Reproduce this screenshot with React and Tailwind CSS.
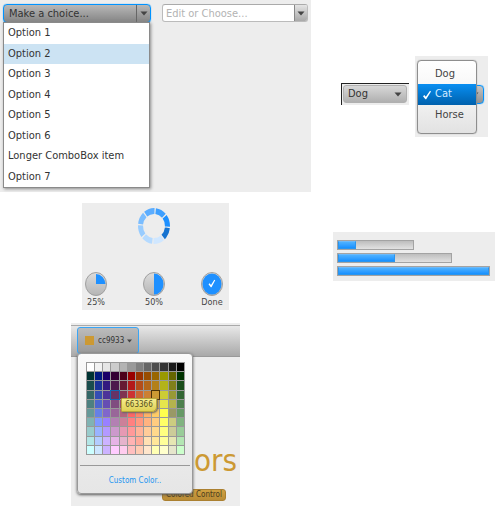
import React from 'react';

const OPTIONS = [
  'Option 1', 'Option 2', 'Option 3', 'Option 4', 'Option 5', 'Option 6',
  'Longer ComboBox item', 'Option 7',
];

const PALETTE = [
  'ffffff f2f2f2 e6e6e6 cccccc b3b3b3 999999 808080 666666 4d4d4d 333333 1a1a1a 000000',
  '003333 001a80 1a0068 330033 4d001a 990000 993300 994d00 996600 999900 666600 003300',
  '1a4d4d 1a3399 331a80 4d1a4d 661a33 b31a1a b34d1a b3661a b3801a b3b31a 80801a 1a4d1a',
  '336666 334db3 4d3399 663366 803350 cc3333 cc6633 cc8033 cc9933 cccc33 999933 336633',
  '4d8080 4d66cc 664db3 804d80 994d66 e64d4d e6804d e6994d e6b34d e6e64d b3b34d 4d804d',
  '669999 6680e6 8066cc 996699 b36680 ff6666 ff8566 ffb366 ffcc66 ffff4d 999966 669966',
  '80b3b3 8099ff 9980ff b380b3 cc8099 ff8080 ff9980 ffb380 ffcc80 ffff66 cccc80 80b380',
  '99cccc 99b3ff b399ff cc99cc e699b3 ff9999 ffb399 ffcc99 ffd98c ffff80 cccc99 99cc99',
  'b3e6e6 b3ccff ccb3ff e6b3e6 e6b3cc ffb3b3 ffaa99 ffe0b3 ffe699 ffff99 e6e6b3 b3e6b3',
  'ccffff cce6ff ccb3ff ffccff ffccee ffbfbf ffccb3 ffe6cc ffffb3 ffffcc e6e6cc ccffcc',
].map((row) => row.split(' '));

const SEGMENTS = ['#3d9fff', '#1e90ff', '#1673d0', '#d0e7ff', '#b5daff', '#98ccff', '#7abdff', '#5badff'];

function Caret({ className = '' }) {
  return (
    <svg className={className} width="8" height="5" viewBox="0 0 8 5" aria-hidden="true">
      <path d="M0.5 0.5h7L4 4.5z" fill="#444" />
    </svg>
  );
}

function Check({ className = '' }) {
  return (
    <svg className={className} width="10" height="10" viewBox="0 0 10 10" aria-hidden="true">
      <path d="M1 6.2 2.3 5 3.8 6.8 8 0.8 9 1.4 4.2 9.3H3.4z" fill="#fff" />
    </svg>
  );
}

function ComboPanel() {
  return (
    <section className="flex h-[192px] items-start gap-[11px] bg-[#ededed] px-[3px] pt-1">
      <div className="relative w-[148px]">
        <div className="relative h-[19px] rounded-[4px] border border-[#0093ff] bg-linear-to-b from-[#b8b8b8] to-[#858585] shadow-[0_0_1px_#0093ff]">
          <select
            aria-label="Make a choice"
            defaultValue=""
            className="block h-[18px] w-full appearance-none bg-transparent pl-[5px] text-[11px] leading-[18px] text-[#333] outline-none"
          >
            <option value="">Make a choice...</option>
            {OPTIONS.map((o) => <option key={o}>{o}</option>)}
          </select>
          <span className="pointer-events-none absolute inset-y-0 right-0 flex w-[14px] items-center justify-center border-l border-[#666]">
            <Caret />
          </span>
        </div>
        <ul
          role="listbox"
          aria-label="Choices"
          className="absolute top-[18px] left-0 grid h-[166px] w-[147px] grid-rows-8 border border-[#8a8a8a] bg-white text-[11px] text-[#333] shadow-[1px_1px_3px_#888]"
        >
          {OPTIONS.map((o, i) => (
            <li
              key={o}
              role="option"
              aria-selected={i === 1}
              className={`flex items-center pl-1 leading-4 ${i === 1 ? 'bg-[#cce3f3]' : ''}`}
            >
              {o}
            </li>
          ))}
        </ul>
      </div>
      <div className="flex h-[18px] w-[146px] overflow-hidden rounded-[3px] border border-[#bbb] border-t-[#aaa] bg-white">
        <input
          type="text"
          aria-label="Edit or choose"
          placeholder="Edit or Choose..."
          className="min-w-0 flex-1 bg-transparent pt-px pl-[3px] text-[11px] leading-4 outline-none placeholder:text-[#b3b3b3]"
        />
        <button
          type="button"
          aria-label="Show choices"
          className="flex w-[13px] items-center justify-center border-l border-[#888] bg-linear-to-b from-[#e4e4e4] to-[#a9a9a9]"
        >
          <Caret />
        </button>
      </div>
    </section>
  );
}

function ChoicePanels() {
  return (
    <section className="flex items-start gap-[6px] pt-[56px] pl-[30px]">
      <div className="mt-[27px] w-[68px] border-t border-l border-[#222] bg-[#ededed] pt-px pb-[2px] pl-px pr-[2px]">
        <div className="relative h-[18px] rounded-[3px] border border-[#b0b0b0] bg-linear-to-b from-[#d8d8d8] to-[#b0b0b0]">
          <select
            aria-label="Animal"
            className="block h-4 w-full appearance-none bg-transparent pl-1 text-[11px] leading-4 text-[#333] outline-none"
          >
            <option>Dog</option>
            <option>Cat</option>
            <option>Horse</option>
          </select>
          <Caret className="pointer-events-none absolute top-[6px] right-1" />
        </div>
      </div>
      <div className="relative h-[81px] w-[73px] bg-[#ededed] pt-[29px] pl-[40px]">
        <button
          type="button"
          aria-label="Close animal menu"
          className="flex h-[19px] w-[29px] items-center justify-end rounded-[4px] border border-[#0093ff] bg-linear-to-b from-[#c4c4c4] to-[#929292] pr-1 shadow-[0_0_1px_#0093ff]"
        >
          <Caret />
        </button>
        <ul
          role="listbox"
          aria-label="Animals"
          className="absolute top-1 left-[2px] h-[74px] w-[60px] rounded-[4px] border border-[#8e8e8e] bg-linear-to-b from-white via-[#f4f4f4] to-[#e2e2e2] pt-[3px] text-[11px] text-[#444] shadow-[0_0_1px_#888]"
        >
          <li role="option" aria-selected="false" className="flex h-5 items-center pl-[17px]">Dog</li>
          <li role="option" aria-selected="true" className="flex h-[21px] items-center gap-[3px] bg-linear-to-b from-[#0a8ff2] to-[#0061ad] pl-1 text-[#d5ebff]">
            <Check />
            Cat
          </li>
          <li role="option" aria-selected="false" className="flex h-5 items-center pl-[17px]">Horse</li>
        </ul>
      </div>
    </section>
  );
}

function segmentPath(i) {
  const point = (deg, rx, ry) => {
    const a = ((deg - 90) * Math.PI) / 180;
    return `${(17 + rx * Math.cos(a)).toFixed(2)} ${(19 + ry * Math.sin(a)).toFixed(2)}`;
  };
  const from = i * 45 + 7;
  const to = i * 45 + 47;
  return `M${point(from, 16, 18)}A16 18 0 0 1 ${point(to, 16, 18)}L${point(to, 11, 12)}A11 12 0 0 0 ${point(from, 11, 12)}Z`;
}

function Dial({ value, label }) {
  return (
    <figure className="flex w-[30px] flex-col items-center">
      <svg width="24" height="26" viewBox="0 0 24 26" role="img" aria-label={`Progress ${label}`}>
        <defs>
          <linearGradient id={`dial-${value}`} x1="0" y1="0" x2="0" y2="1">
            <stop offset="0" stopColor="#dcdcdc" />
            <stop offset="1" stopColor="#b5b5b5" />
          </linearGradient>
        </defs>
        <ellipse cx="12" cy="13" rx="10.5" ry="11.5" fill={`url(#dial-${value})`} stroke="#a0a0a0" />
        {value === 25 && <path d="M12 13V3A9.5 10.5 0 0 1 21.5 13z" fill="#1e90ff" />}
        {value === 50 && <path d="M12 2.5A9.5 10.5 0 0 1 12 23.5z" fill="#1e90ff" />}
        {value === 100 && (
          <>
            <ellipse cx="12" cy="13" rx="9.5" ry="10.5" fill="#1e90ff" />
            <path d="M8.5 13.3 9.6 12.3 11 13.9 14.3 8.7 15.2 9.2 11.5 16.3H10.8z" fill="#fff" />
          </>
        )}
      </svg>
      <figcaption className="text-[9px] leading-[10px] text-[#444]">{label}</figcaption>
    </figure>
  );
}

function IndicatorPanel() {
  return (
    <section className="ml-[82px] flex h-[107px] w-[147px] flex-col items-center justify-between bg-[#ededed] pt-1 pr-[3px] pb-[3px]">
      <svg width="34" height="38" viewBox="0 0 34 38" role="img" aria-label="Loading">
        {SEGMENTS.map((color, i) => <path key={color} d={segmentPath(i)} fill={color} />)}
      </svg>
      <div className="flex w-[146px] justify-between">
        <Dial value={25} label="25%" />
        <Dial value={50} label="50%" />
        <Dial value={100} label="Done" />
      </div>
    </section>
  );
}

function Bar({ value, className }) {
  return (
    <div
      role="progressbar"
      aria-label="Progress"
      aria-valuenow={value}
      className={`h-[10px] border border-[#a3a3a3] bg-linear-to-b from-[#bdbdbd] to-[#e2e2e2] ${className}`}
    >
      <div
        className="h-full border border-[#2a95ee] border-t-[#6bb9fa] bg-linear-to-b from-[#4db1ff] to-[#1490ff]"
        style={{ width: `${value}%` }}
      />
    </div>
  );
}

function BarPanel() {
  return (
    <section className="mt-[29px] ml-[22px] flex h-[49px] w-[162px] flex-col gap-[3px] bg-[#ededed] px-1 pt-2">
      <Bar value={24} className="w-[77px]" />
      <Bar value={50} className="w-[115px]" />
      <Bar value={100} className="w-[153px]" />
    </section>
  );
}

function ColorPanel() {
  return (
    <section className="relative mt-[13px] ml-[71px] h-[183px] w-[169px] overflow-hidden bg-[#ededed] pt-[2px]">
      <header className="h-[32px] border-t border-b border-t-[#aaa] border-b-[#999] bg-linear-to-b from-[#e8e8e8] to-[#a9a9a9] pt-px pl-[6px]">
        <button
          type="button"
          className="flex h-[27px] w-[62px] items-center gap-1 rounded-[3px] border border-[#3aa5f5] bg-linear-to-b from-[#bcbcbc] to-[#999] pl-[7px] text-[8px] text-[#333]"
        >
          <span className="size-[9px] shrink-0 bg-[#cc9933]" />
          cc9933
          <svg className="-ml-px shrink-0" width="5" height="4" viewBox="0 0 5 4" aria-hidden="true">
            <path d="M0 0.5h5L2.5 3.5z" fill="#444" />
          </svg>
        </button>
      </header>
      <h2 className="mt-[83px] pr-[3px] text-right text-[31px] leading-[40px] text-[#cc9933]">ors</h2>
      <button
        type="button"
        className="mt-[9px] ml-[91px] flex h-3 w-[64px] items-center justify-center rounded-[3px] border border-[#ab8030] bg-linear-to-b from-[#cfa040] to-[#b98c36] text-[8px] whitespace-nowrap text-[#4a3c1c]"
      >
        Colored Control
      </button>
      <div className="absolute top-[30px] left-[6px] h-[141px] w-[116px] rounded-[4px] border border-[#999] bg-linear-to-b from-[#fafafa] via-[#ededed] to-[#e6e6e6] px-[2px] pt-2 shadow-[0_1px_3px_#555]">
        <div className="mx-[6px] grid h-[93px] w-[99px] grid-cols-12 grid-rows-10 gap-px border border-[#999] bg-[#999]">
          {PALETTE.flatMap((row, r) => row.map((hex, c) => (
            <button
              key={`${r}-${c}`}
              type="button"
              aria-label={`#${hex}`}
              style={{ backgroundColor: `#${hex}` }}
              className={
                hex === '663366' ? 'outline outline-[#1468b4]' : hex === 'cc9933' ? 'outline outline-[#4a3208]' : ''
              }
            />
          )))}
        </div>
        <hr className="mt-[10px] border-[#999]" />
        <a href="#custom" className="mt-2 block text-center text-[8px] leading-[14px] text-[#1e96f0]">Custom Color..</a>
        <div
          role="tooltip"
          className="absolute top-[44px] left-[43px] h-[14px] w-[36px] rounded-[1px] rounded-br-[5px] border border-[#b8a83c] bg-linear-to-b from-[#f5ec8c] to-[#dfd052] text-center text-[8px] leading-3 text-[#55501c] shadow-[1px_1px_2px_#666]"
        >
          663366
        </div>
      </div>
    </section>
  );
}

export default function App() {
  return (
    <main className="min-h-screen bg-white font-['DejaVu_Sans_Condensed','DejaVu_Sans',sans-serif]">
      <div className="grid grid-cols-[311px_1fr]">
        <ComboPanel />
        <ChoicePanels />
      </div>
      <div className="grid grid-cols-[311px_1fr] pt-[11px]">
        <IndicatorPanel />
        <BarPanel />
      </div>
      <ColorPanel />
    </main>
  );
}
